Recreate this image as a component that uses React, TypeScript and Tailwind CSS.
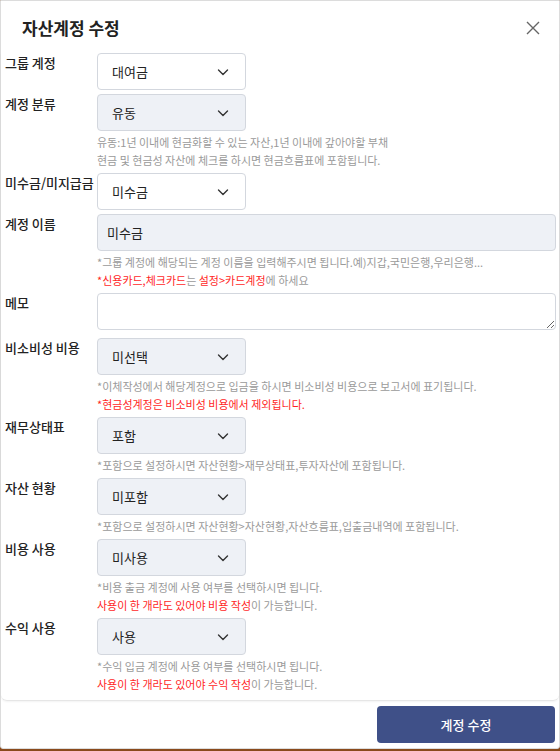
import type { ReactNode } from "react";

const font = { fontFamily: '"Noto Sans CJK KR", "Noto Sans", sans-serif' };

function Chevron() {
  return (
    <svg width="14" height="14" viewBox="0 0 14 14" fill="none">
      <path d="M2.5 5l4.5 4.5L11.5 5" stroke="#333" strokeWidth="1.4" strokeLinecap="round" strokeLinejoin="round" />
    </svg>
  );
}

function Select({ value, disabled }: { value: string; disabled?: boolean }) {
  return (
    <div
      className={
        disabled
          ? "flex h-[37px] w-[149px] items-center justify-between rounded-[4px] border border-[#d3d7de] bg-[#eef1f6] pl-[14px] pr-[15px] text-[13px] text-[#222]"
          : "flex h-[37px] w-[149px] items-center justify-between rounded-[4px] border border-[#d3d7de] bg-white pl-[14px] pr-[15px] text-[13px] text-[#222]"
      }
    >
      <span>{value}</span>
      <Chevron />
    </div>
  );
}

function Row({ label, children, help }: { label: string; children: ReactNode; help?: ReactNode }) {
  return (
    <div className="flex">
      <div className="w-[92px] shrink-0 text-[13px] font-medium text-[#222]">{label}</div>
      <div className="min-w-0 flex-1">
        {children}
        {help && <div className="mt-[2px] text-[11px] leading-[18px] text-[#9a9a9a]">{help}</div>}
      </div>
    </div>
  );
}

const Red = ({ children }: { children: ReactNode }) => <span className="text-[#ff1f1f]">{children}</span>;

export default function App() {
  return (
    <div className="h-[751px] w-[560px] bg-[#8a4a1c]" style={font}>
      <div className="flex h-[749px] flex-col rounded-b-[3px] border border-[#dcdcdc] bg-white">
        <div className="flex h-[52px] items-center justify-between pl-[21px] pr-[19px] pt-[1px]">
          <h1 className="text-[17px] font-bold text-[#222]">자산계정 수정</h1>
          <svg width="14" height="14" viewBox="0 0 14 14" fill="none">
            <path d="M1 1l12 12M13 1L1 13" stroke="#666" strokeWidth="1.4" />
          </svg>
        </div>
        <div className="flex flex-col gap-[4px] rounded-b-[6px] border-b border-[#e6e6e6] pb-[7px] pl-[4px] pr-[3px] shadow-[0_1px_2px_rgba(0,0,0,0.05)]">
          <Row label="그룹 계정">
            <Select value="대여금" />
          </Row>
          <Row
            label="계정 분류"
            help={
              <>
                <div>유동:1년 이내에 현금화할 수 있는 자산,1년 이내에 갚아야할 부채</div>
                <div>현금 및 현금성 자산에 체크를 하시면 현금흐름표에 포함됩니다.</div>
              </>
            }
          >
            <Select value="유동" disabled />
          </Row>
          <Row label="미수금/미지급금">
            <Select value="미수금" />
          </Row>
          <Row
            label="계정 이름"
            help={
              <>
                <div>*그룹 계정에 해당되는 계정 이름을 입력해주시면 됩니다.예)지갑,국민은행,우리은행...</div>
                <div>
                  <Red>*신용카드,체크카드</Red>는 <Red>설정&gt;카드계정</Red>에 하세요
                </div>
              </>
            }
          >
            <div className="flex h-[37px] items-center rounded-[4px] border border-[#d3d7de] bg-[#eef1f6] px-[9px] text-[13px] text-[#222]">
              미수금
            </div>
          </Row>
          <Row label="메모">
            <textarea className="mb-[4px] block h-[37px] w-full rounded-[4px] border border-[#d3d7de] bg-white" />
          </Row>
          <Row
            label="비소비성 비용"
            help={
              <>
                <div>*이체작성에서 해당계정으로 입금을 하시면 비소비성 비용으로 보고서에 표기됩니다.</div>
                <div>
                  <Red>*현금성계정은 비소비성 비용에서 제외됩니다.</Red>
                </div>
              </>
            }
          >
            <Select value="미선택" disabled />
          </Row>
          <Row label="재무상태표" help={<div>*포함으로 설정하시면 자산현황&gt;재무상태표,투자자산에 포함됩니다.</div>}>
            <Select value="포함" disabled />
          </Row>
          <Row label="자산 현황" help={<div>*포함으로 설정하시면 자산현황&gt;자산현황,자산흐름표,입출금내역에 포함됩니다.</div>}>
            <Select value="미포함" disabled />
          </Row>
          <Row
            label="비용 사용"
            help={
              <>
                <div>*비용 출금 계정에 사용 여부를 선택하시면 됩니다.</div>
                <div>
                  <Red>사용이 한 개라도 있어야 비용 작성</Red>이 가능합니다.
                </div>
              </>
            }
          >
            <Select value="미사용" disabled />
          </Row>
          <Row
            label="수익 사용"
            help={
              <>
                <div>*수익 입금 계정에 사용 여부를 선택하시면 됩니다.</div>
                <div>
                  <Red>사용이 한 개라도 있어야 수익 작성</Red>이 가능합니다.
                </div>
              </>
            }
          >
            <Select value="사용" disabled />
          </Row>
        </div>
        <div className="flex justify-end pr-[4px] pt-[5px]">
          <button className="h-[37px] w-[178px] rounded-[4px] bg-[#3f5088] text-[13px] font-medium text-white">계정 수정</button>
        </div>
      </div>
    </div>
  );
}
